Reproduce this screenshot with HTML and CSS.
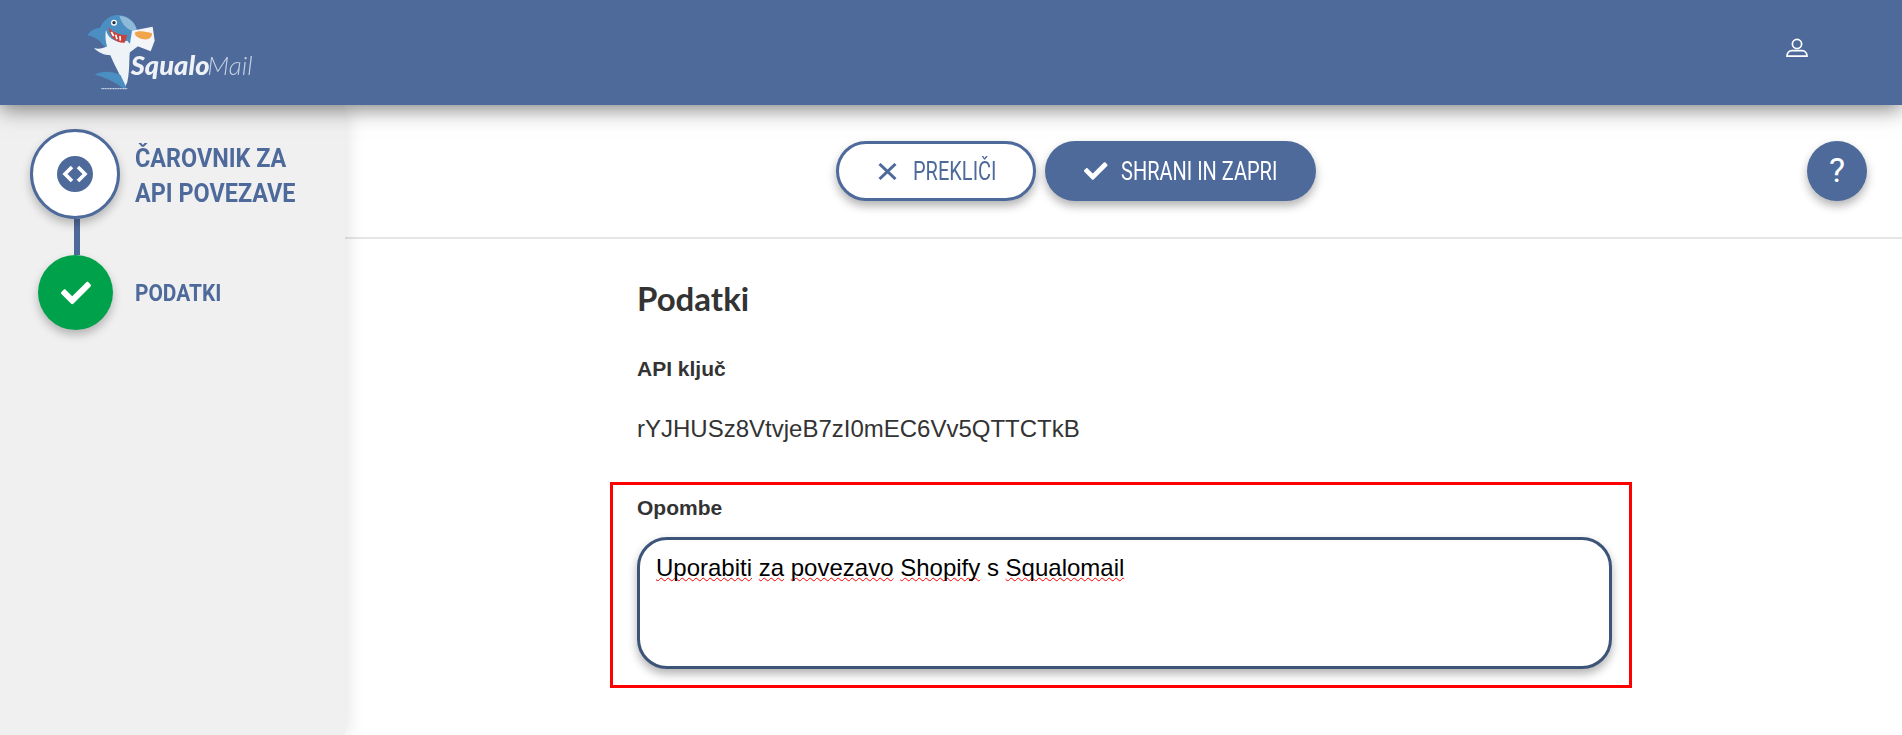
FILE: index.html
```html
<!DOCTYPE html>
<html lang="en">
<head>
    <meta charset="UTF-8">
    <meta name="viewport" content="width=device-width, initial-scale=1.0">
    <title>SqualoMail - API povezave</title>
    <link rel="stylesheet" href="styles.css">
</head>
<body>
    <header class="topbar">
        <svg class="logo" viewBox="0 0 540 270" aria-label="SqualoMail">
            <!-- shark -->
            <path d="M22 76C34 58 50 52 66 54L66 98C52 86 38 79 22 76Z" fill="#4b8fc2"/>
            <path d="M56 78C56 38 88 13 116 15C146 17 168 38 172 64L146 104L112 146L82 116C66 104 56 92 56 78Z" fill="#4b8fc2"/>
            <path d="M118 17C146 18 166 38 171 62C150 66 128 50 118 17Z" fill="#8fb9d8"/>
            <path d="M78 60C84 86 110 102 142 92L154 108C144 130 152 172 142 216L134 234C122 192 100 162 90 132C78 108 74 82 78 60Z" fill="#eef3f8"/>
            <path d="M86 52C98 66 118 78 142 74L134 98C110 100 88 84 86 52Z" fill="#c8413c"/>
            <path d="M94 66L101 78M107 74L111 88M120 78L121 92" stroke="#fff" stroke-width="5"/>
            <circle cx="102" cy="38" r="9" fill="#fff"/>
            <circle cx="102" cy="38" r="5" fill="#26323f"/>
            <path d="M42 114C60 120 80 112 100 100L114 132C88 140 60 134 42 114Z" fill="#eef3f8"/>
            <path d="M132 112L170 86L180 104L138 136Z" fill="#eef3f8"/>
            <path d="M44 194C70 180 102 184 122 196L138 230L136 240C116 222 84 204 44 194Z" fill="#4b8fc2"/>
            <path d="M64 236H142" stroke="#dfe7ef" stroke-width="3" stroke-dasharray="4 1"/>
            <!-- envelope -->
            <path d="M156 62L218 50L224 92L212 124L150 100Z" fill="#f3f5f8"/>
            <path d="M164 68C180 60 200 66 216 70C216 84 206 90 192 88C178 86 166 80 164 68Z" fill="#f0a44c"/>
            <text class="logo-squalo" x="152" y="195">Squalo</text>
            <text class="logo-mail" x="382" y="195">Mail</text>
        </svg>
        <svg class="user-icon" viewBox="0 0 22 19">
            <circle cx="11" cy="6" r="4.6"/>
            <path d="M1 18.2C1 15 3 12.6 6 12.6H16C19 12.6 21 15 21 18.2Z"/>
        </svg>
    </header>

    <div class="page">
        <aside class="sidebar">
            <div class="step">
                <div class="step-circle step-circle-big">
                    <svg class="code-icon" viewBox="0 0 36 36">
                        <circle cx="18" cy="18" r="18" fill="#4e6a9b"/>
                        <path d="M15 11L8 18L15 25M21 11L28 18L21 25" fill="none" stroke="#fff" stroke-width="3.6"/>
                    </svg>
                </div>
                <div class="step-label">ČAROVNIK ZA<br>API POVEZAVE</div>
            </div>
            <div class="step-line"></div>
            <div class="step step-small">
                <div class="step-circle step-circle-done">
                    <svg class="check" viewBox="0 0 512 512"><path d="M173.9 439.4l-166.4-166.4c-10-10-10-26.2 0-36.2l36.2-36.2c10-10 26.2-10 36.2 0L192 312.7 432.1 72.6c10-10 26.2-10 36.2 0l36.2 36.2c10 10 10 26.2 0 36.2l-294.4 294.4c-10 10-26.2 10-36.2 0z"/></svg>
                </div>
                <div class="step-label">PODATKI</div>
            </div>
        </aside>

        <main class="content">
            <div class="toolbar">
                <div class="toolbar-buttons">
                    <button class="btn btn-cancel">
                        <svg class="times" viewBox="0 0 19 17"><path d="M1.5 1L17.5 16M17.5 1L1.5 16"/></svg>
                        <span class="btn-text">PREKLIČI</span>
                    </button>
                    <button class="btn btn-save">
                        <svg class="check check-btn" viewBox="0 0 512 512"><path d="M173.9 439.4l-166.4-166.4c-10-10-10-26.2 0-36.2l36.2-36.2c10-10 26.2-10 36.2 0L192 312.7 432.1 72.6c10-10 26.2-10 36.2 0l36.2 36.2c10 10 10 26.2 0 36.2l-294.4 294.4c-10 10-26.2 10-36.2 0z"/></svg>
                        <span class="btn-text">SHRANI IN ZAPRI</span>
                    </button>
                </div>
                <div class="help">?</div>
            </div>

            <div class="form">
                <h2>Podatki</h2>
                <div class="field-label">API ključ</div>
                <div class="api-key">rYJHUSz8VtvjeB7zI0mEC6Vv5QTTCTkB</div>
                <div class="highlight">
                    <div class="field-label">Opombe</div>
                    <div class="note"><span class="typo">Uporabiti</span> <span class="typo">za</span> <span class="typo">povezavo</span> <span class="typo">Shopify</span> s <span class="typo">Squalomail</span></div>
                </div>
            </div>
        </main>
    </div>
</body>
</html>
```

FILE: styles.css
```css
html, body {
    height: 100%;
}
body {
    margin: 0;
    font-family: "Liberation Sans", Arial, sans-serif;
    color: #333;
    background-color: #fff;
    overflow: hidden;
}
.topbar {
    position: relative;
    z-index: 2;
    height: 105px;
    background-color: #4e6a9b;
    box-shadow: 0 4px 20px rgba(0, 0, 0, 0.5);
    display: flex;
    align-items: center;
    justify-content: space-between;
    padding: 0 94px 0 80px;
}
.logo {
    width: 180px;
    height: 90px;
    margin-top: 5px;
    filter: blur(0.4px);
}
.logo-squalo {
    font-family: Lato, sans-serif;
    font-weight: 900;
    font-style: italic;
    font-size: 82px;
    fill: #eef2f7;
}
.logo-mail {
    font-family: Lato, sans-serif;
    font-weight: 300;
    font-style: italic;
    font-size: 78px;
    fill: #c3cfdf;
}
.user-icon {
    width: 22px;
    height: 19px;
    margin-top: -10px;
    fill: none;
    stroke: #fff;
    stroke-width: 1.7;
}
.page {
    display: flex;
    height: 630px;
}
.sidebar {
    position: relative;
    z-index: 1;
    width: 345px;
    flex-shrink: 0;
    background-color: #f0f0f0;
    box-shadow: 4px 0 16px rgba(0, 0, 0, 0.1);
    padding: 24px 0 0 30px;
    box-sizing: border-box;
}
.step {
    display: flex;
    align-items: center;
    gap: 15px;
}
.step-small {
    padding-left: 8px;
    gap: 22px;
}
.step-circle {
    border-radius: 50%;
    display: flex;
    align-items: center;
    justify-content: center;
    box-sizing: border-box;
    box-shadow: 0 5px 10px rgba(0, 0, 0, 0.25);
}
.step-circle-big {
    width: 90px;
    height: 90px;
    background-color: #fff;
    border: 3px solid #4e6a9b;
}
.step-circle-done {
    width: 75px;
    height: 75px;
    background-color: #00a14b;
}
.code-icon {
    width: 36px;
    height: 36px;
}
.check {
    width: 30px;
    height: 30px;
    fill: #fff;
}
.step-label {
    font-family: Roboto, sans-serif;
    font-weight: 700;
    font-size: 26px;
    line-height: 35px;
    padding-top: 3px;
    color: #4e6a9b;
    transform: scaleX(0.9);
    transform-origin: left;
}
.step-small .step-label {
    font-size: 24px;
    padding-top: 1px;
    transform: scaleX(0.87);
}
.step-line {
    width: 6px;
    height: 36px;
    margin-left: 44px;
    background-color: #4e6a9b;
}
.content {
    flex: 1;
    min-width: 0;
}
.toolbar {
    display: flex;
    align-items: center;
    height: 134px;
    box-sizing: border-box;
    padding: 36px 35px 36px 0;
    border-bottom: 2px solid #e5e5e5;
}
.toolbar-buttons {
    flex: 1;
    display: flex;
    justify-content: center;
    gap: 9px;
}
.btn {
    height: 60px;
    border-radius: 30px;
    box-sizing: border-box;
    display: flex;
    align-items: center;
    padding: 0 0 0 39px;
    font-family: Roboto, sans-serif;
    font-size: 25px;
    box-shadow: 0 5px 10px rgba(0, 0, 0, 0.3);
    cursor: pointer;
}
.btn-text {
    transform: scaleX(0.8);
    transform-origin: left;
    white-space: nowrap;
}
.btn-cancel {
    width: 200px;
    gap: 16px;
    background-color: #fff;
    color: #4e6a9b;
    border: 3px solid #4e6a9b;
}
.btn-save {
    width: 271px;
    gap: 13px;
    background-color: #4e6a9b;
    color: #fff;
    border: none;
}
.times {
    width: 19px;
    height: 17px;
    fill: none;
    stroke: #4e6a9b;
    stroke-width: 3;
}
.check-btn {
    width: 24px;
    height: 24px;
}
.help {
    width: 60px;
    height: 60px;
    border-radius: 50%;
    background-color: #4e6a9b;
    color: #fff;
    font-family: Roboto, sans-serif;
    font-size: 34px;
    padding-bottom: 2px;
    box-sizing: border-box;
    display: flex;
    align-items: center;
    justify-content: center;
    box-shadow: 0 5px 10px rgba(0, 0, 0, 0.3);
}
.form {
    padding-left: 292px;
    width: 994px;
}
h2 {
    margin: 36px 0 0;
    font-family: Lato, sans-serif;
    font-weight: 700;
    font-size: 33px;
    line-height: 46px;
}
.field-label {
    font-weight: 700;
    font-size: 21px;
    line-height: 24px;
}
.form > .field-label {
    margin-top: 36px;
}
.api-key {
    margin-top: 33px;
    font-size: 24px;
    line-height: 30px;
    width: max-content;
}
.highlight {
    margin: 38px 0 0 -27px;
    width: 1022px;
    height: 206px;
    box-sizing: border-box;
    border: 3px solid #f00;
    padding: 11px 0 0 24px;
}
.note {
    margin-top: 17px;
    width: 975px;
    height: 132px;
    box-sizing: border-box;
    border: 3px solid #3d5479;
    border-radius: 30px;
    background-color: #fff;
    box-shadow: 0 5px 10px rgba(0, 0, 0, 0.3);
    padding: 14px 16px;
    font-size: 24px;
    line-height: 28px;
    color: #000;
}
.typo {
    text-decoration: underline wavy #f00;
    text-decoration-thickness: 1px;
    text-decoration-skip-ink: none;
    text-underline-offset: 1px;
}
```
